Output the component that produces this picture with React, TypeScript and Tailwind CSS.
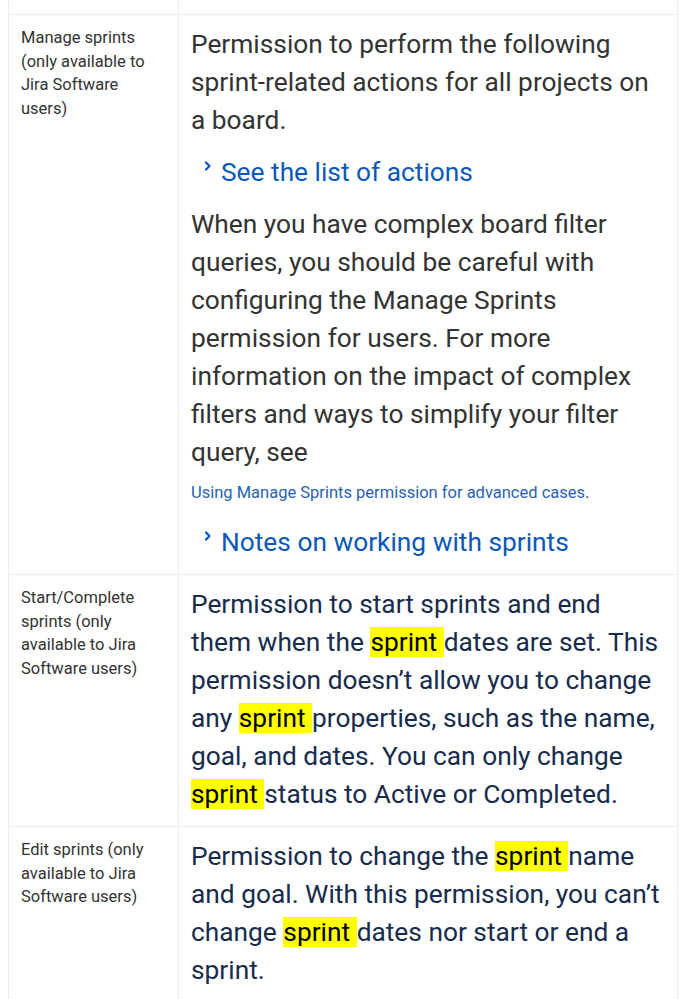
const Hl = ({ children }: { children: React.ReactNode }) => (
  <span className="bg-[#ffff00] text-black">{children}</span>
);

const Chevron = () => (
  <svg width="10" height="14" viewBox="0 0 10 14" className="mr-[8px] mb-[18px] inline-block text-[#0052cc]">
    <path d="M3 3.5l3.5 3.5-3.5 3.5" fill="none" stroke="currentColor" strokeWidth="2.2" strokeLinecap="round" strokeLinejoin="round" />
  </svg>
);

const ExpandLink = ({ label }: { label: string }) => (
  <div className="flex items-end pl-[12px] text-[26.3px] leading-[38px] text-[#0b58b8]">
    <Chevron />
    <span>{label}</span>
  </div>
);

export default function App() {
  const rows = [
    {
      label: "Manage sprints (only available to Jira Software users)",
      body: (
        <div className="text-[#333333]">
          <p>Permission to perform the following sprint-related actions for all projects on a board.</p>
          <div className="mt-[14px]">
            <ExpandLink label="See the list of actions" />
          </div>
          <p className="mt-[14px]">
            When you have complex board filter queries, you should be careful with configuring the Manage Sprints
            permission for users. For more information on the impact of complex filters and ways to simplify your
            filter query, see
          </p>
          <p className="mt-[10px] text-[16.5px] leading-[24px]">
            <span className="text-[#2a62b0]">Using Manage Sprints permission for advanced cases</span>.
          </p>
          <div className="mt-[18px]">
            <ExpandLink label="Notes on working with sprints" />
          </div>
        </div>
      ),
    },
    {
      label: "Start/Complete sprints (only available to Jira Software users)",
      body: (
        <p className="text-[#172b4d]">
          Permission to start sprints and end them when the <Hl>sprint </Hl>dates are set. This permission doesn’t
          allow you to change any <Hl>sprint </Hl>properties, such as the name, goal, and dates. You can only change{" "}
          <Hl>sprint </Hl>status to Active or Completed.
        </p>
      ),
    },
    {
      label: "Edit sprints (only available to Jira Software users)",
      body: (
        <p className="text-[#172b4d]">
          Permission to change the <Hl>sprint </Hl>name and goal. With this permission, you can’t change{" "}
          <Hl>sprint </Hl>dates nor start or end a sprint.
        </p>
      ),
    },
  ];

  return (
    <div className="h-[999px] overflow-hidden bg-white font-['Roboto',sans-serif]">
      <div className="ml-[8px] w-[670px] border-x border-[#ebecf0]">
        <div className="grid grid-cols-[170px_1fr] border-b border-[#ebecf0]">
          <div className="h-[14px] border-r border-[#ebecf0]" />
          <div />
        </div>
        {rows.map((row) => (
          <div key={row.label} className="grid grid-cols-[170px_1fr] border-b border-[#ebecf0]">
            <div className="border-r border-[#ebecf0] px-[12px] pt-[11px] text-[16.5px] leading-[23.5px] text-[#333333]">
              {row.label}
            </div>
            <div className="pl-[12px] pr-[16px] pt-[10px] pb-[13px] text-[26.3px] leading-[38px]">{row.body}</div>
          </div>
        ))}
      </div>
    </div>
  );
}
